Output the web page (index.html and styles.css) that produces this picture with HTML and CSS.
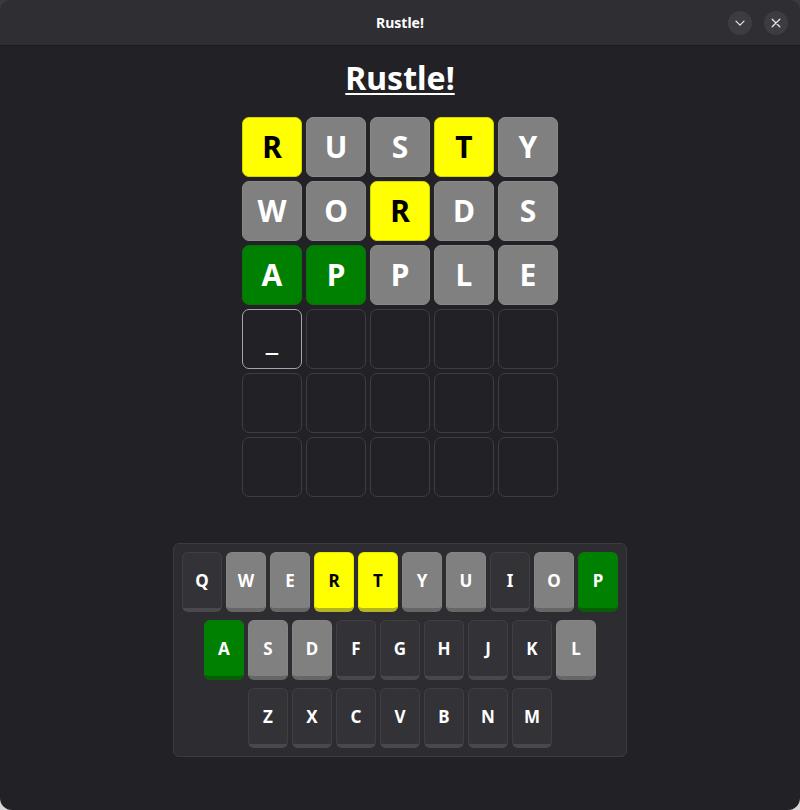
FILE: index.html
```html
<!DOCTYPE html>
<html lang="en">
<head>
<meta charset="utf-8">
<title>Rustle!</title>
<link rel="stylesheet" href="styles.css">
</head>
<body>
<div class="window">
  <header class="titlebar">
    <span class="titlebar-title">Rustle!</span>
    <div class="titlebar-buttons">
      <button class="tb-btn" aria-label="Minimize">
        <svg width="12" height="12" viewBox="0 0 12 12"><path d="M2 4.2 L6 8.2 L10 4.2" fill="none" stroke="#e6e6e6" stroke-width="1.2" stroke-linecap="round" stroke-linejoin="round"/></svg>
      </button>
      <button class="tb-btn" aria-label="Close">
        <svg width="12" height="12" viewBox="0 0 12 12"><path d="M2.2 2.2 L9.8 9.8 M9.8 2.2 L2.2 9.8" fill="none" stroke="#e6e6e6" stroke-width="1.3" stroke-linecap="round"/></svg>
      </button>
    </div>
  </header>
  <main class="content">
    <h1 class="game-title">Rustle!</h1>
    <div class="board">
      <div class="tile yellow">R</div><div class="tile gray">U</div><div class="tile gray">S</div><div class="tile yellow">T</div><div class="tile gray">Y</div>
      <div class="tile gray">W</div><div class="tile gray">O</div><div class="tile yellow">R</div><div class="tile gray">D</div><div class="tile gray">S</div>
      <div class="tile green">A</div><div class="tile green">P</div><div class="tile gray">P</div><div class="tile gray">L</div><div class="tile gray">E</div>
      <div class="tile cursor">_</div><div class="tile"></div><div class="tile"></div><div class="tile"></div><div class="tile"></div>
      <div class="tile"></div><div class="tile"></div><div class="tile"></div><div class="tile"></div><div class="tile"></div>
      <div class="tile"></div><div class="tile"></div><div class="tile"></div><div class="tile"></div><div class="tile"></div>
    </div>
    <div class="keyboard">
      <div class="kb-row">
        <div class="key">Q</div><div class="key gray">W</div><div class="key gray">E</div><div class="key yellow">R</div><div class="key yellow">T</div><div class="key gray">Y</div><div class="key gray">U</div><div class="key">I</div><div class="key gray">O</div><div class="key green">P</div>
      </div>
      <div class="kb-row">
        <div class="key green">A</div><div class="key gray">S</div><div class="key gray">D</div><div class="key">F</div><div class="key">G</div><div class="key">H</div><div class="key">J</div><div class="key">K</div><div class="key gray">L</div>
      </div>
      <div class="kb-row">
        <div class="key">Z</div><div class="key">X</div><div class="key">C</div><div class="key">V</div><div class="key">B</div><div class="key">N</div><div class="key">M</div>
      </div>
    </div>
  </main>
</div>
</body>
</html>
```

FILE: styles.css
```css
html, body {
  margin: 0;
  padding: 0;
}
body {
  background: linear-gradient(#3a3a3a, #d8d8d8);
  font-family: "Noto Sans", "Open Sans", sans-serif;
  width: 800px;
  height: 810px;
  overflow: hidden;
}
.window {
  width: 800px;
  height: 810px;
  border-radius: 12px;
  overflow: hidden;
  background: #222226;
  display: flex;
  flex-direction: column;
}
.titlebar {
  height: 45px;
  flex: 0 0 45px;
  background: #2e2e33;
  border-bottom: 1px solid #1c1c20;
  display: flex;
  align-items: center;
  justify-content: center;
  position: relative;
  color: #ffffff;
}
.titlebar-title {
  font-weight: 700;
  font-size: 14px;
  margin-top: -1px;
}
.titlebar-buttons {
  position: absolute;
  right: 12px;
  top: 11px;
  display: flex;
  gap: 12px;
}
.tb-btn {
  width: 24px;
  height: 24px;
  border-radius: 50%;
  border: none;
  padding: 0;
  background: #3c3c41;
  display: flex;
  align-items: center;
  justify-content: center;
}
.content {
  display: flex;
  flex-direction: column;
  align-items: center;
}
.game-title {
  margin: 12px 0 0;
  font-size: 32px;
  line-height: 40px;
  font-weight: 700;
  color: #ffffff;
  text-decoration: underline;
  text-decoration-thickness: 2px;
  text-underline-offset: 3px;
}
.board {
  margin-top: 19px;
  display: grid;
  grid-template-columns: repeat(5, 60px);
  grid-auto-rows: 60px;
  gap: 4px;
}
.tile {
  box-sizing: border-box;
  border: 1px solid #3d3d42;
  border-radius: 7px;
  display: flex;
  align-items: center;
  justify-content: center;
  font-size: 30px;
  font-weight: 700;
  color: #ffffff;
  line-height: 1;
}
.tile.gray {
  background: #808080;
  border-color: #8a8a8a;
}
.tile.yellow {
  background: #ffff00;
  border-color: #d6d600;
  color: #000000;
}
.tile.green {
  background: #008000;
  border-color: #0a700a;
}
.tile.cursor {
  border-color: #a6a6aa;
}
.keyboard {
  margin-top: 46px;
  box-sizing: border-box;
  width: 454px;
  padding: 8px;
  background: #2d2d31;
  border: 1px solid #3b3b40;
  border-radius: 6px;
  display: flex;
  flex-direction: column;
  align-items: center;
  gap: 8px;
}
.kb-row {
  display: flex;
  gap: 4px;
}
.key {
  box-sizing: border-box;
  width: 40px;
  height: 60px;
  background: #323237;
  border: 1px solid #3f3f44;
  border-bottom: 4px solid #48484d;
  border-radius: 6px;
  display: flex;
  align-items: center;
  justify-content: center;
  font-size: 17px;
  font-weight: 700;
  color: #ffffff;
}
.key.gray {
  background: #808080;
  border-color: #858585;
  border-bottom-color: #666666;
}
.key.yellow {
  background: #ffff00;
  border-color: #e8e800;
  border-bottom-color: #b5b522;
  color: #000000;
}
.key.green {
  background: #008000;
  border-color: #0a780a;
  border-bottom-color: #075e07;
}
```
